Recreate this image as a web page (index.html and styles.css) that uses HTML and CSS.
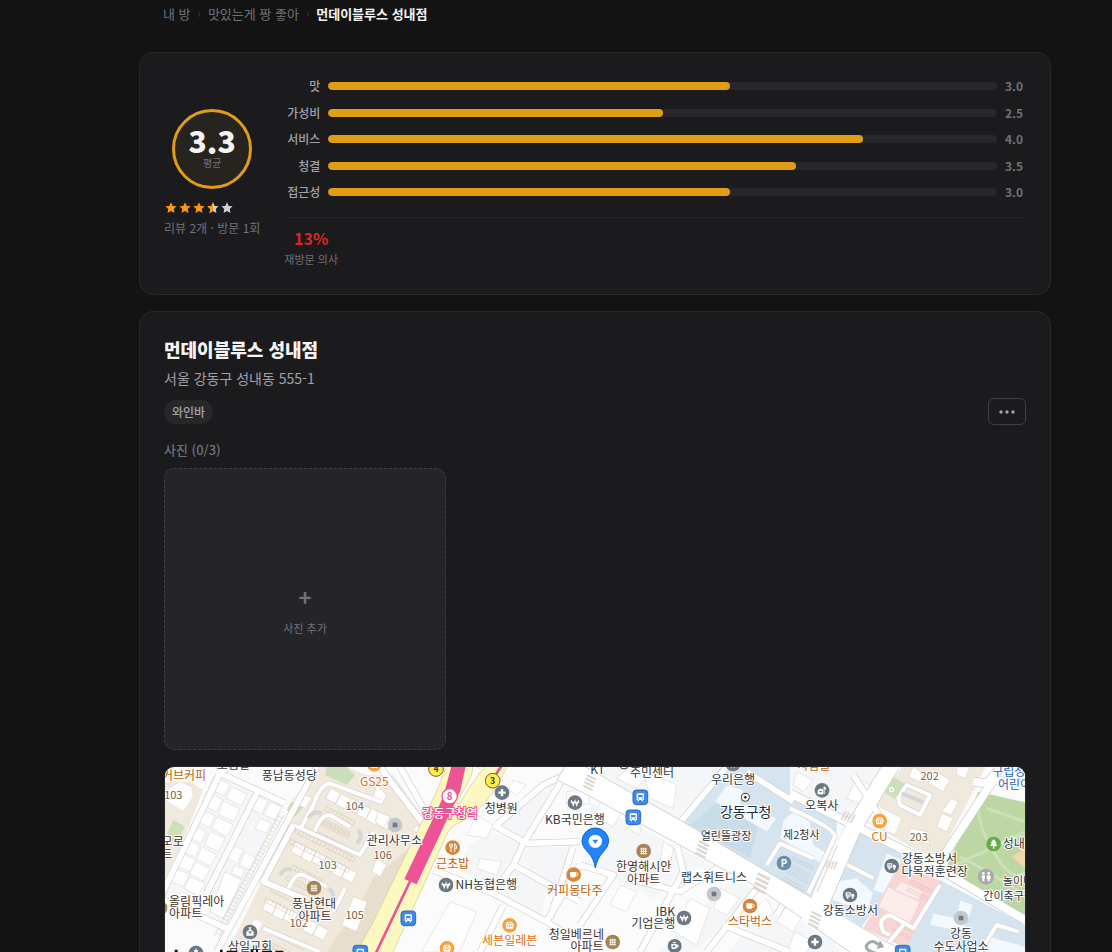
FILE: index.html
```html
<!DOCTYPE html>
<html lang="ko">
<head>
<meta charset="utf-8">
<meta name="viewport" content="width=device-width, initial-scale=1">
<title>먼데이블루스 성내점</title>
<link rel="stylesheet" href="styles.css">
</head>
<body>
<main class="page">
  <nav class="crumbs" aria-label="경로">
    <a href="#">내 방</a><span class="sep">›</span><a href="#">맛있는게 짱 좋아</a><span class="sep">›</span><strong>먼데이블루스 성내점</strong>
  </nav>

  <section class="card summary">
    <div class="score">
      <div class="ring"><b>3.3</b><span>평균</span></div>
      <svg class="stars" viewBox="0 0 70 14" role="img" aria-label="별점 3.3">
        <defs>
          <path id="star" d="M7 1.2 8.7 4.9 12.6 5.3 9.7 8 10.5 12 7 10 3.5 12 4.3 8 1.4 5.3 5.3 4.9Z"/>
          <clipPath id="half"><rect width="7" height="14"/></clipPath>
        </defs>
        <g fill="#ff9810"><use href="#star"/><use href="#star" x="14"/><use href="#star" x="28"/></g>
        <g fill="#cdd3dc"><use href="#star" x="42"/><use href="#star" x="56"/></g>
        <g transform="translate(42 0)"><use href="#star" fill="#ff9810" clip-path="url(#half)"/></g>
      </svg>
      <p class="small">리뷰 2개 · 방문 1회</p>
    </div>
    <div class="detail">
      <div class="bars">
        <div class="bar"><span class="name">맛</span><span class="track"><i style="width:60%"></i></span><span class="val">3.0</span></div>
        <div class="bar"><span class="name">가성비</span><span class="track"><i style="width:50%"></i></span><span class="val">2.5</span></div>
        <div class="bar"><span class="name">서비스</span><span class="track"><i style="width:80%"></i></span><span class="val">4.0</span></div>
        <div class="bar"><span class="name">청결</span><span class="track"><i style="width:70%"></i></span><span class="val">3.5</span></div>
        <div class="bar"><span class="name">접근성</span><span class="track"><i style="width:60%"></i></span><span class="val">3.0</span></div>
      </div>
      <div class="revisit"><div class="stat"><b>13%</b><span>재방문 의사</span></div></div>
    </div>
  </section>

  <section class="card place">
    <h1>먼데이블루스 성내점</h1>
    <p class="addr">서울 강동구 성내동 555-1</p>
    <div class="tools">
      <span class="tag">와인바</span>
      <button class="more" type="button" aria-label="더보기">
        <svg viewBox="0 0 18 6" aria-hidden="true"><circle cx="3" cy="3" r="1.7"/><circle cx="9" cy="3" r="1.7"/><circle cx="15" cy="3" r="1.7"/></svg>
      </button>
    </div>
    <h2>사진 (0/3)</h2>
    <div class="photos">
      <button class="add" type="button"><span class="plus">+</span><span>사진 추가</span></button>
    </div>
    <div class="map">
      <svg viewBox="15 6 2580 780" preserveAspectRatio="xMidYMin slice" role="img" aria-label="지도">
        <defs>
          <g id="roads-s">
            <path d="M205 6 180 25 0 400M290 85 140 385M170 20 375 115M0 400 200 490M470 6 170 561M400 180 310 350 430 400"/>
            <path d="M800 190 700 60 660 6M830 200 720 6M830 215 765 190"/>
            <path d="M820 315 1000 385 1160 470 1270 540M1210 40 1090 235 1060 300 1000 385M1260 230 1100 235 1000 180M1240 245 1170 460M1060 300 1260 410M1010 180 1150 60 1260 10M1160 470 1260 300M1030 420 960 561M1260 300 1360 330 1260 480"/>
            <path d="M1550 240 1570 320 1440 561M1670 310 1560 380 1400 340M1810 345 1640 561M1690 480 1890 561M1700 6 1550 185M1880 400 1850 450M1900 110 1760 20M2080 30 2170 170"/>
          </g>
          <g id="roads-m">
            <path d="M1890 85 2080 180 2300 290 2595 465M2500 45 2340 290M2530 0 2480 55 2440 50M2595 60 2500 45"/>
          </g>
          <g id="roads-l"><path d="M2195 0 2080 190 1990 400 1950 480"/></g>
          <g id="lanes">
            <path d="M425 185 460 120Q480 60 510 55L660 110M400 180 600 270 640 200M465 200Q480 150 510 150L570 185M310 350 440 400M380 390Q400 320 430 330L500 365M555 370 520 440M310 490 480 561"/>
            <path d="M1945 385 2025 215Q2025 190 1890 130M2045 290 2140 340M2340 360 2260 490 2190 450Q2150 460 2170 500L2190 510M2180 540 2230 480M2575 500 2510 480 2460 561M1820 300 1860 235 1960 280M2215 100 2240 60 2310 90 2280 150 2220 120Z"/>
          </g>
          <g id="won"><circle r="22" fill="#6c7882"/><path d="M-11-7-5 8 0-6 5 8 11-7M-13-1H13" fill="none" stroke="#fff" stroke-width="3.5"/></g>
          <g id="bus"><rect x="-22" y="-22" width="44" height="44" rx="10" fill="#4189e8" stroke="#2c69bd" stroke-width="3"/><path d="M-11-9Q-11-12-8-12H8Q11-12 11-9V8H8V12H4V8H-4V12H-8V8H-11Z" fill="#fff"/><path d="M-7-7H7V0H-7Z" fill="#4189e8"/><circle cx="-6" cy="4" r="1.8" fill="#4189e8"/><circle cx="6" cy="4" r="1.8" fill="#4189e8"/></g>
          <g id="apt"><circle r="22" fill="#a58458"/><path d="M-10-6H10M-10 1H10M-10 8H10M-6-10V10M0-10V10M6-10V10" stroke="#fff" stroke-width="2.6"/></g>
          <g id="cup"><circle r="22" fill="#d6873a"/><path d="M-11-8H7V2Q7 9 0 9H-4Q-11 9-11 2Z" fill="#fff"/><path d="M7-5H10Q13-5 13-1T6 4" fill="none" stroke="#fff" stroke-width="3"/></g>
          <g id="shop"><circle r="22" fill="#f6a13a"/><path d="M-12-2-7-11H7L12-2 10 10H-10Z" fill="#fff"/><path d="M-6 4V-2M0 6V-2M6 4V-2M-5-6H5" stroke="#f6a13a" stroke-width="3"/></g>
          <g id="dot"><circle r="22" fill="#c4c7cb"/><path d="M-7-7H7V7H-7Z" fill="#717a80"/></g>
          <g id="med"><circle r="22" fill="#6c7882"/><path d="M-11 0H11M0-11V11" stroke="#fff" stroke-width="7"/></g>
          <g id="truck"><circle r="22" fill="#6c7882"/><path d="M-13-8H2V5H-13ZM4-4H10L13 0V5H4Z" fill="#fff"/><path d="M-10-4H0M-10 0H0" stroke="#6c7882" stroke-width="2"/><circle cx="-7" cy="8" r="3" fill="#fff"/><circle cx="8" cy="8" r="3" fill="#fff"/></g>
          <g id="lot"><path d="M0 0H96M0 14H96M0 36H96M0 50H96M0 0V14M12 0V14M24 0V14M36 0V14M48 0V14M60 0V14M72 0V14M84 0V14M96 0V14M0 36V50M12 36V50M24 36V50M36 36V50M48 36V50M60 36V50M72 36V50M84 36V50M96 36V50"/></g>
          <g id="row"><path d="M0 0H34V34H0ZM34 0H68V36H34ZM68-2H102V32H68ZM102 0H136V34H102ZM136-2H170V36H136ZM170 0H206V34H170Z"/></g>
          <g id="strip"><path d="M0 0H420M0 15H420M12 0V15M24 0V15M36 0V15M48 0V15M60 0V15M72 0V15M84 0V15M96 0V15M108 0V15M120 0V15M132 0V15M144 0V15M156 0V15M168 0V15M180 0V15M192 0V15M204 0V15M216 0V15M228 0V15M240 0V15M252 0V15M264 0V15M276 0V15M288 0V15M300 0V15M312 0V15M324 0V15M336 0V15M348 0V15M360 0V15M372 0V15M384 0V15M396 0V15M408 0V15"/></g>
          <g id="cross"><path d="M0 0H34M2 12H36M4 24H38M6 36H40"/></g>
        </defs>

        <rect x="0" y="0" width="2610" height="790" fill="#fbfbfb"/>
        <!-- blocks -->
        <g fill="#f5f6f7">
          <path d="M190 30 285 75 100 470 15 435V380Z"/><path d="M295 88 375 120 190 490 145 470V400Z"/>
          <path d="M1010 170 1160 60 1200 45 1080 230ZM1110 245H1235L1190 370 1070 300ZM1000 200 1085 240 1050 300 1000 370 890 310 930 240ZM1060 315 1165 360 1140 460 1010 395Z"/>
          <path d="M1290 110 1540 240 1560 320 1480 400 1360 340 1270 290ZM1300 6H1680L1560 180 1380 80ZM1560 250 1665 305 1570 310ZM1700 350 1790 370 1700 480 1600 561H1500ZM1890 6H2180L2080 165 1900 80ZM1880 450 2020 530 2060 600H1680L1800 430Z"/>
        </g>
        <g fill="#f0e9dd">
          <path d="M15 50 90 50 130 75 60 250 15 340Z"/><path d="M470 6H560L620 30H700L830 210 640 480 590 620H175L400 150Z"/>
          <path d="M2230 0H2480L2450 60 2340 270 2290 265 2110 165Z"/>
        </g>
        <path d="M640 340 760 240 640 480 600 561H500L620 380Z" fill="#e8decd"/>
        <g fill="#cbdfb9"><path d="M40 165 75 185 45 240 20 210ZM400 100 430 125 405 155 380 135ZM500 6H560L585 30 560 60 495 30ZM2200 35 2240 60 2210 105 2170 80Z"/></g>
        <g fill="#d5e4ee">
          <path d="M1665 25 1690 0H1890V80L2030 160 2030 220 1955 395 1900 370 1570 170Z"/>
          <path d="M2090 190 2220 265 2250 290 2105 485 1980 405ZM2340 345 2595 480V790H2240L2230 550Z"/>
        </g>
        <path d="M1640 140Q1670 95 1710 120L1800 165 1770 280 1590 180Z" fill="#c8dcea"/>
        <path d="M2225 290 2345 350 2240 550 2110 490Z" fill="#f8d6d4"/>
        <path d="M2455 80 2595 112V450L2350 330Z" fill="#bdd7a4"/>
        <g fill="none" stroke="#cce0ba" stroke-width="9"><path d="M2460 90Q2440 160 2500 260T2595 320M2480 130 2595 170M2360 310Q2480 260 2595 200M2400 275 2500 330 2595 390"/></g>
        <path d="M2555 275 2595 250V310Z" fill="#efd9ac"/>

        <!-- buildings -->
        <g fill="#fefefe" stroke="#dcdcdc" stroke-width="2">
          <path d="M160 35 210 58 192 93 145 70ZM215 65 262 88 243 122 198 100ZM140 78 188 105 168 140 125 118ZM190 108 240 132 220 168 175 148ZM120 130 165 152 148 188 103 165ZM172 155 220 180 200 215 155 192ZM95 178 140 200 122 235 80 213ZM150 200 195 220 175 260 133 240ZM75 220 120 243 105 275 58 255ZM125 245 170 270 150 303 110 283ZM60 262 108 285 90 320 43 300ZM108 290 150 312 130 348 88 325ZM40 308 88 328 70 365 20 345ZM90 335 135 355 115 393 72 370Z"/>
          <path d="M285 90 325 108 305 148 268 130ZM330 112 365 125 345 165 310 148ZM300 160 335 175 318 205 285 192ZM215 240 250 255 232 295 195 275ZM255 262 290 280 270 315 238 298ZM195 320 245 345 190 460 150 440ZM225 300 255 315 245 340 215 325Z"/>
          <path d="M60 50 95 65 100 95 70 140 20 110 25 70ZM420 80 455 100 435 130 395 110ZM285 460 310 475 290 510 260 500Z"/>
          <path d="M950 6H1010L1030 50 990 30ZM1060 45 1100 60 1070 90 1045 75ZM950 150 1000 180 980 220 920 210ZM960 280 1025 290 1010 330 950 310ZM1220 80 1280 70 1290 115 1220 125ZM870 410 950 440 900 561H785Z"/>
          <path d="M1330 100 1390 130 1360 185 1300 150ZM1400 190 1440 170 1440 210ZM1510 230 1540 250 1530 300 1500 290ZM1380 360 1430 380 1400 440 1350 420ZM1450 20 1550 60 1540 130 1470 100ZM1410 6 1455 40 1430 70 1370 40ZM1590 400 1650 430 1610 540 1540 500ZM1680 370 1740 400 1700 450 1660 430Z"/>
          <path d="M1880 420 1930 445 1900 500 1850 470ZM1820 400 1840 440 1800 490 1750 460ZM1905 500 1960 530 1930 580 1880 560ZM2090 40 2140 65 2110 120 2060 100ZM1910 20 1960 45 1930 80 1900 60ZM2140 115 2225 160 2205 210 2110 165Z"/>
        </g>
        <g fill="#f3f9fc" stroke="#dfe9ef" stroke-width="2">
          <path d="M1700 60 1750 75 1740 115 1850 160 1820 200 1665 110ZM1870 165 1900 140 1950 170 1960 240 2010 270 1990 300 1860 220ZM2020 350 2090 340 2140 385 2120 440 2000 400ZM2180 265 2225 285 2170 385 2140 375ZM2400 405 2440 420 2410 500 2310 480 2320 445 2390 460ZM2490 515 2595 545V620H2460Z"/>
        </g>
        <g fill="#fceceb" stroke="#f0cfcd" stroke-width="2"><path d="M2185 365 2280 410 2250 475 2155 425ZM2225 350 2290 380 2275 405 2200 375Z"/></g>
        <g fill="#fff" stroke="#ddd3c4" stroke-width="2">
          <use href="#row" transform="translate(512 70) rotate(27)"/><use href="#row" transform="translate(408 230) rotate(27)"/><use href="#row" transform="translate(322 402) rotate(27)"/>
          <path d="M580 395 622 410 590 500 545 480ZM650 60 680 90 665 120 640 95ZM655 140 690 155 670 190 645 170ZM650 280 680 300 660 335 635 320Z"/>
          <path d="M2260 6 2290 25 2280 50 2245 35ZM2330 20 2370 45 2350 80 2305 55ZM2375 100 2395 110 2375 150 2345 140ZM2345 145 2380 160 2360 200 2330 185ZM2250 190 2300 200 2310 240 2245 215ZM2390 6 2430 6 2415 40 2390 30Z"/>
        </g>
        <g fill="none" stroke="#d6c9b8" stroke-width="1.5">
          <use href="#strip" transform="translate(372 150) rotate(118)"/><use href="#lot" transform="translate(500 125) rotate(27)"/><use href="#lot" transform="translate(485 165) rotate(27)"/><use href="#lot" transform="translate(410 190) rotate(27)"/><use href="#lot" transform="translate(500 235) rotate(27)"/><use href="#lot" transform="translate(400 300) rotate(27)"/><use href="#lot" transform="translate(335 365) rotate(27)"/><use href="#lot" transform="translate(350 500) rotate(27)"/>
        </g>
        <g fill="none" stroke="#b9c5cd" stroke-width="1.5"><use href="#lot" transform="translate(1900 275) rotate(27) scale(.7)"/><use href="#lot" transform="translate(1885 315) rotate(27) scale(.7)"/></g>
        <g fill="none" stroke="#d9b6b4" stroke-width="1.5"><use href="#lot" transform="translate(2255 345) rotate(27) scale(.7)"/><use href="#lot" transform="translate(2210 470) rotate(27) scale(.6)"/></g>

        <!-- streets -->
        <g fill="none" stroke-linejoin="round">
          <use href="#lanes" stroke="#d3d3d3" stroke-width="16"/><use href="#lanes" stroke="#fff" stroke-width="12"/>
          <use href="#roads-s" stroke="#cfcfd1" stroke-width="21"/><use href="#roads-m" stroke="#c6c8ca" stroke-width="28"/><use href="#roads-l" stroke="#c6c8ca" stroke-width="50"/>
          <use href="#roads-s" stroke="#fff" stroke-width="17"/><use href="#roads-m" stroke="#fff" stroke-width="24"/><use href="#roads-l" stroke="#fff" stroke-width="46"/>
        </g>
        <path d="M1230-20 1560 165 1805 310 1950 395 2110 490 2250 571 2300 620H2110L2070 561 2010 520 1890 435 1780 360 1670 302 1545 232 1260 78 1190 45Z" fill="#fff" stroke="#c9cacc" stroke-width="2.5"/>
        <path d="M1988 388 1945 475" stroke="#fff" stroke-width="46"/>
        <path d="M2090 165 2050 250" stroke="#fff" stroke-width="44"/>
        <g fill="none" stroke="#ddd8d2" stroke-width="7">
          <use href="#cross" transform="translate(1280 30) rotate(27) scale(.9)"/><use href="#cross" transform="translate(1617 228) rotate(27)"/><use href="#cross" transform="translate(1793 325) rotate(27) scale(1.2)"/><use href="#cross" transform="translate(1955 440) rotate(27)"/><use href="#cross" transform="translate(2085 150) rotate(120) scale(.8)"/><use href="#cross" transform="translate(2030 290) rotate(110) scale(.7)"/>
        </g>
        <path d="M2152 566Q2112 556 2120 540 2132 522 2152 536L2164 542" fill="none" stroke="#a3a8ab" stroke-width="9"/><path d="M2160 526 2172 546 2150 552Z" fill="#a3a8ab"/>
        <g fill="none" stroke="#d4d6d8" stroke-width="12"><path d="M2225 85 2290 112M445 160Q460 135 485 145M595 195Q612 215 590 235M360 330Q375 305 395 315M505 370Q528 385 515 410"/></g>

        <!-- main road and subway line -->
        <path d="M865-10H940L935 30 890 115 900 115Q930 60 985-10H1050L1000 80Q950 150 905 170 870 180 855 220L690 580H580L635 480 830 80Z" fill="#fdf8bf" stroke="#d9d2a6" stroke-width="2.5"/>
        <path d="M875 0H918L900 80 770 358 733 342 850 95Z" fill="#ee5396"/>
        <path d="M752 345 645 570M1030-5 1000 40" fill="none" stroke="#ee5396" stroke-width="8"/>

        <!-- markers -->
        <g stroke="#6b6230" stroke-width="3" fill="#fdec4a"><circle cx="828" cy="12" r="22"/><circle cx="998" cy="47" r="22"/></g>
        <circle cx="869" cy="94" r="23" fill="#fff" stroke="#ee5396" stroke-width="4"/>
        <use href="#dot" x="705" y="180"/><use href="#dot" x="1662" y="387"/><use href="#dot" x="2403" y="459"/>
        <use href="#med" x="1026" y="83"/><use href="#med" x="1965" y="531"/>
        <use href="#won" x="1245" y="113"/><use href="#won" x="858" y="360"/><use href="#won" x="1572" y="459"/><use href="#won" x="1719" y="-3"/>
        <use href="#bus" x="745" y="460"/><use href="#bus" x="1441" y="97"/><use href="#bus" x="1420" y="157"/><use href="#bus" x="2228" y="563"/><use href="#bus" x="601" y="563"/>
        <use href="#apt" x="462" y="369"/><use href="#apt" x="1451" y="258"/><use href="#apt" x="1358" y="531"/><use href="#apt" x="0" y="429"/>
        <use href="#cup" x="1241" y="329"/><use href="#cup" x="1770" y="423"/>
        <use href="#shop" x="1049" y="481"/><use href="#shop" x="861" y="550"/><use href="#shop" x="2159" y="168"/><use href="#shop" x="643" y="-2"/>
        <use href="#truck" x="2195" y="303"/><use href="#truck" x="2070" y="390"/>
        <g transform="translate(878 248)"><circle r="22" fill="#d6873a"/><path d="M-9-12V-4Q-9 0-5 0T-1-4V-12M-5-12V13M6 13V-12Q12-10 12 2H6" fill="none" stroke="#fff" stroke-width="3"/></g>
        <g transform="translate(270 501)"><circle r="22" fill="#6c7882"/><path d="M-11 11V-1L0-9 11-1V11Z" fill="#fff"/><path d="M0-15V-6M-4-12H4" stroke="#fff" stroke-width="3"/><path d="M-5 0H5M0-3V6" stroke="#6c7882" stroke-width="3"/></g>
        <g transform="translate(108 564)"><circle r="22" fill="#6c7882"/><path d="M0-13V10M-6-6H6" stroke="#fff" stroke-width="4"/></g>
        <g transform="translate(1544 543)"><circle r="21" fill="#6c7882"/><path d="M-10-6H7V2Q7 9-2 9T-10 2Z" fill="#fff"/><path d="M7-3Q14-3 10 3L6 5M-6-10H4" fill="none" stroke="#fff" stroke-width="3"/><circle cx="-2" cy="1" r="3.5" fill="#6c7882"/></g>
        <g transform="translate(1872 294)"><circle r="22" fill="#6691a8"/></g>
        <g transform="translate(1986 76)"><circle r="22" fill="#6c7882"/><path d="M-12 11V0L-3-5V-1L3-4V11ZM7 11V-12M4-8H11V-2" fill="#fff" stroke="#fff" stroke-width="2.5"/><path d="M-8 4H0" stroke="#6c7882" stroke-width="3"/></g>
        <g transform="translate(2501 237)"><circle r="22" fill="#66ab48"/><path d="M0-15 9-4H5L11 6H2V14H-2V6H-11L-5-4H-9Z" fill="#fff"/></g>
        <g transform="translate(2478 335)"><circle r="24" fill="#a7a9ac"/><g fill="#fff"><circle cx="-8" cy="-10" r="4"/><circle cx="8" cy="-10" r="4"/><path d="M-13-4H-3V5H-5V14H-11V5H-13ZM4-4H12L15 6H11V14H5V6H1Z"/></g></g>
        <circle cx="2195" cy="74" r="6" fill="none" stroke="#fff" stroke-width="4"/>
        <circle cx="1756" cy="97" r="12" fill="#fff" stroke="#333" stroke-width="3"/><circle cx="1756" cy="97" r="4" fill="#333"/>
        <circle cx="1392" cy="0" r="12" fill="#fff" stroke="#333" stroke-width="3"/>

        <!-- labels -->
        <g class="lbl num"><text x="40" y="102">103</text><text x="584" y="134">104</text><text x="503" y="312">103</text><text x="668" y="283">106</text><text x="584" y="461">105</text><text x="416" y="485">102</text><text x="2309" y="45">202</text><text x="2276" y="227">203</text></g>
        <g class="lbl warm"><text x="72" y="46">커브커피</text><text x="878" y="310">근초밥</text><text x="1244" y="391">커피몽타주</text><text x="1770" y="484">스타벅스</text><text x="1962" y="16">사람들</text></g>
        <g class="lbl orange"><text x="643" y="62">GS25</text><text x="1049" y="540">세븐일레븐</text><text x="2159" y="229">CU</text></g>
        <g class="lbl brown"><text x="38" y="244">모로</text><text x="22" y="281">트</text><text x="110" y="422">올림픽레아</text><text x="77" y="458">아파트</text><text x="462" y="428">풍납현대</text><text x="465" y="467">아파트</text><text x="1451" y="318">한영해시안</text><text x="1451" y="358">아파트</text><text x="1249" y="523">청일베르네</text><text x="1281" y="559">아파트</text></g>
        <g class="lbl">
          <text x="220" y="12">도심빌</text><text x="388" y="44">풍납동성당</text><text x="703" y="241">관리사무소</text><text x="270" y="558">삼일교회</text><text x="1024" y="145">청병원</text><text x="1245" y="176">KB국민은행</text><text x="979" y="373">NH농협은행</text><text x="1313" y="26">KT</text><text x="1476" y="35">주민센터</text><text x="1662" y="352">랩스휘트니스</text><text x="1516" y="452">IBK</text><text x="1480" y="490">기업은행</text><text x="1719" y="57">우리은행</text><text x="1985" y="134">오복사</text><text x="2308" y="294">강동소방서</text><text x="2324" y="333">다목적훈련장</text><text x="2071" y="450">강동소방서</text><text x="2403" y="520">강동</text><text x="2403" y="559">수도사업소</text><text x="2578" y="249">성내동</text>
        </g>
        <g class="lbl mini"><text x="1698" y="225">열린뜰광장</text><text x="1924" y="221">제2청사</text><text x="2574" y="359">놀이터</text><text x="2546" y="405">간이축구장</text></g>
        <g class="lbl blue"><text x="2563" y="34">구립성내</text><text x="2580" y="71">어린이집</text></g>
        <text class="lbl hall" x="1757" y="156">강동구청</text>
        <text class="lbl station" x="870" y="160">강동구청역</text>
        <text class="line" x="869" y="105">8</text>
        <g class="exit"><text x="828" y="21">4</text><text x="998" y="57">3</text></g>
        <text class="park" x="1872" y="305">P</text>

        <!-- provider mark -->
        <path d="M44 554H53V590H44ZM180 554H188V590H180ZM200 557H232V564H200ZM272 554H280V590H272ZM288 554H294V590H288ZM306 557H336V564H306ZM346 557H370V564H346Z" fill="#111"/>

        <!-- selected place -->
        <path d="M1306 309Q1302 280 1285 263 1266 244 1266 229A40 40 0 0 1 1346 229Q1346 244 1328 263 1311 280 1306 309Z" fill="#2184fa" stroke="#1560c8" stroke-width="3"/>
        <circle cx="1306" cy="229" r="20" fill="#fff"/><path d="M1297 224H1315L1306 236Z" fill="#2184fa"/>
      </svg>
    </div>
  </section>
</main>
</body>
</html>
```
FILE: styles.css
```css
* { box-sizing: border-box; }
html { height: 100%; overflow: hidden; }
body {
  margin: 0;
  height: 100vh;
  overflow-y: auto;
  scrollbar-width: none;
  padding-left: 78px;
  background: #131313;
  color: #f4f4f5;
  font-family: "Noto Sans CJK KR", "Noto Sans", sans-serif;
  font-size: 12px;
  line-height: 16px;
}
p, h1, h2 { margin: 0; }
button { font: inherit; cursor: pointer; }
.page { max-width: 960px; margin: 0 auto; padding: 4px 24px 24px; }
.crumbs { display: flex; gap: 7px; padding: 0 24px; font-size: 13px; line-height: 20px; margin-bottom: 28px; }
.crumbs a { color: #71717a; text-decoration: none; }
.crumbs .sep { color: #3f3f46; font-size: 11px; line-height: 18px; }
.crumbs strong { font-weight: 700; }
.card { background: #1b1b1d; border: 1px solid #29292c; border-radius: 14px; padding: 24px; margin-bottom: 16px; }

.summary { display: flex; align-items: center; gap: 24px; }
.score { display: flex; flex-direction: column; }
.ring {
  align-self: center;
  width: 80px; height: 80px;
  padding-bottom: 4px;
  border: 3px solid #e29d17; border-radius: 50%;
  background: #27231e;
  display: flex; flex-direction: column; align-items: center; justify-content: center;
}
.ring b { font-size: 30px; line-height: 32px; font-weight: 800; }
.ring span { font-size: 10px; line-height: 14px; color: #71717a; }
.stars { width: 70px; height: 14px; margin: 12px 0 2px; }
.small { font-size: 12px; line-height: 22px; color: #71717a; }

.detail { flex: 1; min-width: 0; }
.bars { display: flex; flex-direction: column; justify-content: space-between; min-height: 124px; }
.bar { display: flex; align-items: center; gap: 8px; line-height: 18px; }
.name { width: 36px; text-align: right; color: #a1a1aa; font-weight: 500; }
.track { flex: 1; height: 8px; border-radius: 4px; background: #27272a; overflow: hidden; }
.track i { display: block; height: 100%; border-radius: 4px; background: #e29d17; }
.val { width: 21px; color: #71717a; font-weight: 700; }
.revisit { border-top: 1px solid #242427; margin-top: 16px; padding-top: 10px; display: flex; }
.stat { display: flex; flex-direction: column; align-items: center; }
.stat b { font-size: 16px; line-height: 20px; color: #dc2626; }
.stat span { font-size: 11px; line-height: 22px; color: #71717a; }

.place h1 { font-size: 18px; line-height: 26px; font-weight: 800; }
.addr { margin-top: 4px; font-size: 14px; line-height: 24px; color: #a1a1aa; }
.tools { margin-top: 8px; display: flex; align-items: center; justify-content: space-between; }
.tag { padding: 4px 8px; border-radius: 12px; background: #27272a; color: #a1a1aa; font-weight: 500; }
.more { width: 38px; height: 27px; padding: 0; border: 1px solid #3f3f46; border-radius: 6px; background: none; display: grid; place-items: center; }
.more svg { width: 18px; height: 6px; fill: #a1a1aa; }
.place h2 { margin-top: 15px; font-size: 13px; line-height: 20px; font-weight: 500; color: #71717a; }
.photos { margin-top: 8px; display: grid; grid-template-columns: repeat(3, 1fr); gap: 8px; }
.add {
  aspect-ratio: 1;
  padding: 0 0 2px;
  border: 1px dashed #3f3f42; border-radius: 10px;
  background: #252529; color: #71717a;
  display: flex; flex-direction: column; align-items: center; justify-content: center; gap: 4px;
  font-size: 11px; line-height: 20px;
}
.plus { font-size: 22px; line-height: 36px; font-weight: 700; }
.map { margin-top: 16px; border: 1px solid #29292c; border-radius: 10px; overflow: hidden; }
.map svg { display: block; width: 100%; height: auto; }

.lbl { font-size: 36px; font-weight: 400; text-anchor: middle; fill: #2c3640; stroke: #fff; stroke-width: 6px; stroke-linejoin: round; paint-order: stroke; }
.num { font-size: 33px; fill: #75603c; }
.warm { fill: #bd6108; }
.orange { fill: #e06c0c; }
.brown { fill: #46302a; }
.blue { fill: #1e66b5; }
.mini { font-size: 33px; }
.hall { font-size: 42px; fill: #222a33; }
.station { fill: #fff; stroke: #ee4d92; font-weight: 500; }
.line { font-size: 30px; font-weight: 700; text-anchor: middle; fill: #ee5396; }
.exit { font-size: 26px; font-weight: 700; text-anchor: middle; fill: #33332c; }
.park { font-size: 29px; font-weight: 700; text-anchor: middle; fill: #fff; }
```
